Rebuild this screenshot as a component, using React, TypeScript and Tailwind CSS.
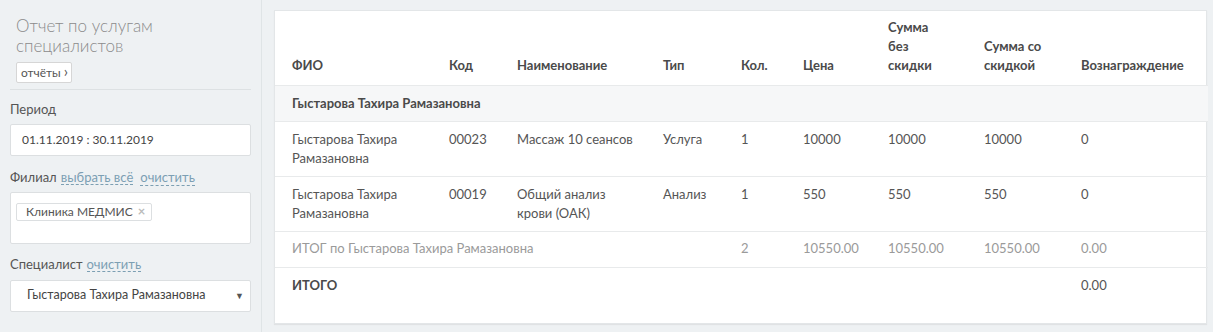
import React from 'react';

// Строки отчета
type Row = {
  fio: string;
  code: string;
  name: React.ReactNode;
  type: string;
  qty: string;
  price: string;
  sumNoDisc: string;
  sumDisc: string;
  reward: string;
};

const rows: Row[] = [
  { fio: 'Гыстарова Тахира Рамазановна', code: '00023', name: 'Массаж 10 сеансов', type: 'Услуга', qty: '1', price: '10000', sumNoDisc: '10000', sumDisc: '10000', reward: '0' },
  { fio: 'Гыстарова Тахира Рамазановна', code: '00019', name: <>Общий анализ<br />крови (ОАК)</>, type: 'Анализ', qty: '1', price: '550', sumNoDisc: '550', sumDisc: '550', reward: '0' },
];

const font = { fontFamily: 'Lato, "Noto Sans", sans-serif' };

function DashedLink({ children }: { children: React.ReactNode }) {
  return (
    <span className="text-[#7c9fb3] border-b border-dashed border-[#7c9fb3] leading-[14px] ml-1">
      {children}
    </span>
  );
}

function Sidebar() {
  return (
    <aside className="w-[262px] shrink-0 bg-[#eef1f3] border-r border-[#dfe4e6] px-[10px] pt-[16px] h-[332px]">
      <div className="px-[6px]">
        <h1 className="text-[17px] font-light leading-[20px] text-[#8b8b8b]">Отчет по услугам специалистов</h1>
        <button className="mt-[6px] h-[21px] pl-[4px] pr-[3px] bg-white border border-[#d6d6d6] rounded-[2px] text-[12px] text-[#555] flex items-center gap-[3px]">
          отчёты <span className="text-[15px] leading-none -mt-[2px]">›</span>
        </button>
      </div>
      <div className="mt-[6px] border-t border-[#dde1e3]" />

      <div className="mt-[10px] text-[13px] text-[#555]">Период</div>
      <div className="mt-[4px] h-[32px] bg-white border border-[#dcdfe1] rounded-[2px] flex items-center px-[11px] text-[12px] text-[#444]">
        01.11.2019 : 30.11.2019
      </div>

      <div className="mt-[12px] text-[13px] text-[#555] flex items-center">
        Филиал <DashedLink>выбрать всё</DashedLink>
        <span className="ml-[3px]"><DashedLink>очистить</DashedLink></span>
      </div>
      <div className="mt-[5px] h-[52px] bg-white border border-[#dcdfe1] rounded-[2px] p-[5px]">
        <span className="inline-flex items-center h-[18px] pl-[9px] pr-[6px] border border-[#dcdfe1] rounded-[2px] text-[12px] text-[#555] gap-[5px]">
          Клиника МЕДМИС <span className="text-[#bbb] text-[13px] font-bold">×</span>
        </span>
      </div>

      <div className="mt-[11px] text-[13px] text-[#555] flex items-center">
        Специалист <DashedLink>очистить</DashedLink>
      </div>
      <div className="mt-[5px] h-[32px] bg-white border border-[#dcdfe1] rounded-[2px] flex items-center justify-between pl-[16px] pr-[6px] text-[12.5px] text-[#444]">
        <span>Гыстарова Тахира Рамазановна</span>
        <span className="text-[9px] text-[#555]">▼</span>
      </div>
    </aside>
  );
}

const cols = ['w-[157px]', 'w-[68px]', 'w-[146px]', 'w-[78px]', 'w-[62px]', 'w-[85px]', 'w-[96px]', 'w-[97px]', 'w-[144px]'];

export default function App() {
  return (
    <div className="flex w-[1213px] h-[332px] bg-[#eef1f3] overflow-hidden" style={font}>
      <Sidebar />
      <main className="flex-1 pl-[12px] pt-[10px]">
        <div className="w-[933px] h-[314px] bg-white border border-[#e3e6e8] shadow-[0_1px_1px_rgba(0,0,0,0.06)]">
          <table className="w-full table-fixed border-collapse text-[13px] text-[#555]">
            <colgroup>
              {cols.map((c, i) => (
                <col key={i} className={c} />
              ))}
            </colgroup>
            <thead>
              <tr className="h-[74px] border-b border-[#e8eaeb] text-[#4a4a4a] font-bold text-left align-bottom">
                <th className="pl-[17px] pb-[10px] leading-[19px]">ФИО</th>
                <th className="pl-[17px] pb-[10px] leading-[19px]">Код</th>
                <th className="pl-[17px] pb-[10px] leading-[19px]">Наименование</th>
                <th className="pl-[17px] pb-[10px] leading-[19px]">Тип</th>
                <th className="pl-[17px] pb-[10px] leading-[19px]">Кол.</th>
                <th className="pl-[17px] pb-[10px] leading-[19px]">Цена</th>
                <th className="pl-[17px] pb-[10px] leading-[19px]">Сумма<br />без<br />скидки</th>
                <th className="pl-[17px] pb-[10px] leading-[19px]">Сумма со<br />скидкой</th>
                <th className="pl-[17px] pb-[10px] leading-[19px]">Вознаграждение</th>
              </tr>
            </thead>
            <tbody>
              <tr className="h-[36px] bg-[#f6f7f8] border-b border-[#e8eaeb]">
                <td colSpan={9} className="pl-[17px] pt-[1px] font-bold text-[#4a4a4a]">Гыстарова Тахира Рамазановна</td>
              </tr>
              {rows.map((r) => (
                <tr key={r.code} className="h-[55px] border-b border-[#e8eaeb] align-top leading-[19px]">
                  <td className="pl-[17px] pt-[8px] pr-[8px]">Гыстарова Тахира<br />Рамазановна</td>
                  <td className="pl-[17px] pt-[8px]">{r.code}</td>
                  <td className="pl-[17px] pt-[8px] pr-[8px]">{r.name}</td>
                  <td className="pl-[17px] pt-[8px]">{r.type}</td>
                  <td className="pl-[17px] pt-[8px]">{r.qty}</td>
                  <td className="pl-[17px] pt-[8px]">{r.price}</td>
                  <td className="pl-[17px] pt-[8px]">{r.sumNoDisc}</td>
                  <td className="pl-[17px] pt-[8px]">{r.sumDisc}</td>
                  <td className="pl-[17px] pt-[8px]">{r.reward}</td>
                </tr>
              ))}
              <tr className="h-[36px] border-b border-[#e8eaeb] text-[#9a9a9a]">
                <td colSpan={4} className="pl-[17px]">ИТОГ по Гыстарова Тахира Рамазановна</td>
                <td className="pl-[17px]">2</td>
                <td className="pl-[17px]">10550.00</td>
                <td className="pl-[17px]">10550.00</td>
                <td className="pl-[17px]">10550.00</td>
                <td className="pl-[17px]">0.00</td>
              </tr>
              <tr className="align-top">
                <td colSpan={8} className="pl-[17px] pt-[8px] font-bold text-[#4a4a4a]">ИТОГО</td>
                <td className="pl-[17px] pt-[8px]">0.00</td>
              </tr>
            </tbody>
          </table>
        </div>
      </main>
    </div>
  );
}
